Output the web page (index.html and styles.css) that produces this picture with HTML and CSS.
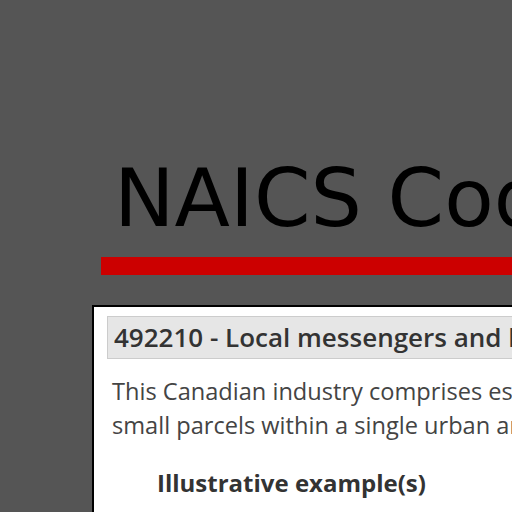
FILE: index.html
```html
<!DOCTYPE html>
<html>
<head>
<meta charset="utf-8">
<link rel="stylesheet" href="styles.css">
</head>
<body>
<div class="page">
  <header class="masthead">
    <h1 class="title">NAICS Code Lookup</h1>
  </header>
  <section class="card">
    <h2 class="card-heading">492210 - Local messengers and local delivery</h2>
    <p class="card-text">This Canadian industry comprises establishments primarily engaged in providing local messenger and delivery services of small parcels within a single urban area.</p>
    <h3 class="card-sub">Illustrative example(s)</h3>
  </section>
</div>
</body>
</html>
```
FILE: styles.css
```css
html, body {
  margin: 0;
  padding: 0;
  background: #555555;
  overflow: hidden;
  height: 512px;
}
.page {
  width: 1800px;
  padding-top: 150px;
}
.masthead {
  margin-left: 101px;
  padding-bottom: 11px;
  border-bottom: 18px solid #cc0000;
}
.title {
  margin: 0;
  padding-left: 13px;
  font-family: "DejaVu Sans", sans-serif;
  font-weight: normal;
  font-size: 81px;
  line-height: 96px;
  color: #000;
  white-space: nowrap;
}
.card {
  margin: 30px 0 0 92px;
  background: #fff;
  border: 2px solid #000;
  padding: 9px 13px;
  height: 400px;
}
.card-heading {
  margin: 0;
  background: #e6e6e6;
  border: 1px solid #cccccc;
  padding: 0 6px;
  height: 41px;
  line-height: 41px;
  font-family: "Open Sans", sans-serif;
  font-weight: 600;
  font-size: 26px;
  color: #333;
  white-space: nowrap;
}
.card-text {
  margin: 15px 0 0 5px;
  width: 1393px;
  font-family: "Open Sans", sans-serif;
  font-size: 23.6px;
  line-height: 34px;
  color: #444;
}
.card-sub {
  margin: 26px 0 0 50px;
  font-family: "Open Sans", sans-serif;
  font-weight: 700;
  font-size: 24px;
  line-height: 30px;
  color: #333;
}
```
